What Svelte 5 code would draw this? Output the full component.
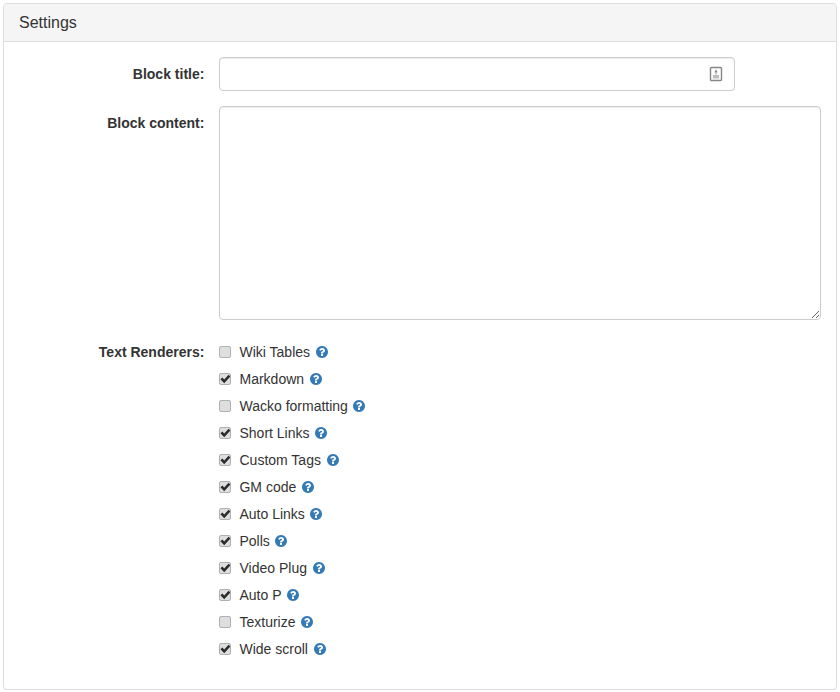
<script>
  const renderers = [
    { name: 'Wiki Tables', on: false },
    { name: 'Markdown', on: true },
    { name: 'Wacko formatting', on: false },
    { name: 'Short Links', on: true },
    { name: 'Custom Tags', on: true },
    { name: 'GM code', on: true },
    { name: 'Auto Links', on: true },
    { name: 'Polls', on: true },
    { name: 'Video Plug', on: true },
    { name: 'Auto P', on: true },
    { name: 'Texturize', on: false },
    { name: 'Wide scroll', on: true }
  ];
</script>

<div class="panel">
  <div class="panel-heading">Settings</div>
  <div class="panel-body">
    <div class="form-group">
      <label class="control-label" for="block-title">Block title:</label>
      <div class="title-field">
        <input id="block-title" class="form-control" type="text" />
        <svg class="field-icon" viewBox="0 0 14 16" width="14" height="16" aria-hidden="true">
          <rect x="1.500" y="1.500" width="11" height="13" rx="1" fill="none" stroke="#858585" stroke-width="1.400" />
          <path d="M7 3.300 8.600 6.300H5.400z" fill="#8e8e8e" />
          <rect x="6.500" y="6" width="1" height="2.500" fill="#8e8e8e" />
          <rect x="4" y="9" width="6" height="3.500" fill="#bdbdbd" />
        </svg>
      </div>
    </div>

    <div class="form-group">
      <label class="control-label" for="block-content">Block content:</label>
      <textarea id="block-content" class="form-control content"></textarea>
    </div>

    <div class="form-group">
      <span class="control-label">Text Renderers:</span>
      <div class="renderers">
        {#each renderers as item}
          <label class="renderer">
            <input type="checkbox" checked={item.on} />
            <span>{item.name}</span>
            <svg class="help" viewBox="0 0 1792 1792" width="14" height="14" aria-hidden="true">
              <path d="M1024 1376v-192q0-14-9-23t-23-9h-192q-14 0-23 9t-9 23v192q0 14 9 23t23 9h192q14 0 23-9t9-23zm256-672q0-88-55.500-163t-138.500-116-170-41q-243 0-371 213-15 24 8 42l132 100q7 6 19 6 16 0 25-12 53-68 86-92 34-24 86-24 48 0 85.500 26t37.500 59q0 38-20 61t-68 45q-63 28-115.500 86.500t-52.500 125.500v36q0 14 9 23t23 9h192q14 0 23-9t9-23q0-19 21.500-49.500t54.500-49.500q32-18 49-28.500t46-35 44.500-48 28-60.500 12.500-81zm384 192q0 209-103 385.500t-279.500 279.500-385.500 103-385.500-103-279.500-279.500-103-385.500 103-385.500 279.500-279.500 385.500-103 385.500 103 279.500 279.500 103 385.500z" fill="#337ab7" />
            </svg>
          </label>
        {/each}
      </div>
    </div>
  </div>
</div>

<style>
  :global(body) {
    background: #fff;
    font-family: "Liberation Sans", Arial, sans-serif;
    font-size: 14px;
    line-height: 20px;
    color: #333;
  }

  .panel {
    margin: 3px 3px 0;
    width: 832px;
    background: #fff;
    border: 1px solid #ddd;
    border-radius: 4px;
    box-shadow: 0 1px 1px rgba(0, 0, 0, 0.05);
  }

  .panel-heading {
    padding: 10px 15px;
    font-size: 16px;
    line-height: 17px;
    background: #f5f5f5;
    border-bottom: 1px solid #ddd;
    border-radius: 3px 3px 0 0;
  }

  .panel-body {
    padding: 15px;
  }

  .form-group {
    display: grid;
    grid-template-columns: 185.4px 1fr;
    column-gap: 15px;
    margin-bottom: 15px;
  }

  .control-label {
    padding-top: 7px;
    text-align: right;
    font-weight: 700;
  }

  .title-field {
    position: relative;
    width: 516px;
  }

  .form-control {
    display: block;
    box-sizing: border-box;
    width: 100%;
    margin: 0;
    height: 34px;
    padding: 6px 12px;
    font: inherit;
    color: #555;
    background: #fff;
    border: 1px solid #ccc;
    border-radius: 4px;
    box-shadow: inset 0 1px 1px rgba(0, 0, 0, 0.075);
  }

  .content {
    height: 214px;
  }

  .field-icon {
    position: absolute;
    top: 9px;
    right: 12px;
  }

  .renderers {
    display: flex;
    flex-direction: column;
    gap: 7px;
    padding-top: 7px;
  }

  .renderer {
    display: flex;
    align-items: center;
    height: 20px;
  }

  .renderer input {
    appearance: none;
    position: relative;
    box-sizing: border-box;
    width: 12px;
    height: 12px;
    margin: 0 8.100px 0 0;
    background: #dedede;
    border: 1px solid #b0b0b0;
    border-radius: 2px;
  }

  .renderer input:checked::after {
    content: '';
    position: absolute;
    inset: 0;
    background: #2b2b2b;
    clip-path: polygon(0 52%, 20% 36%, 38% 56%, 82% 8%, 100% 24%, 38% 92%);
  }

  .help {
    margin-left: 4.600px;
  }
</style>
